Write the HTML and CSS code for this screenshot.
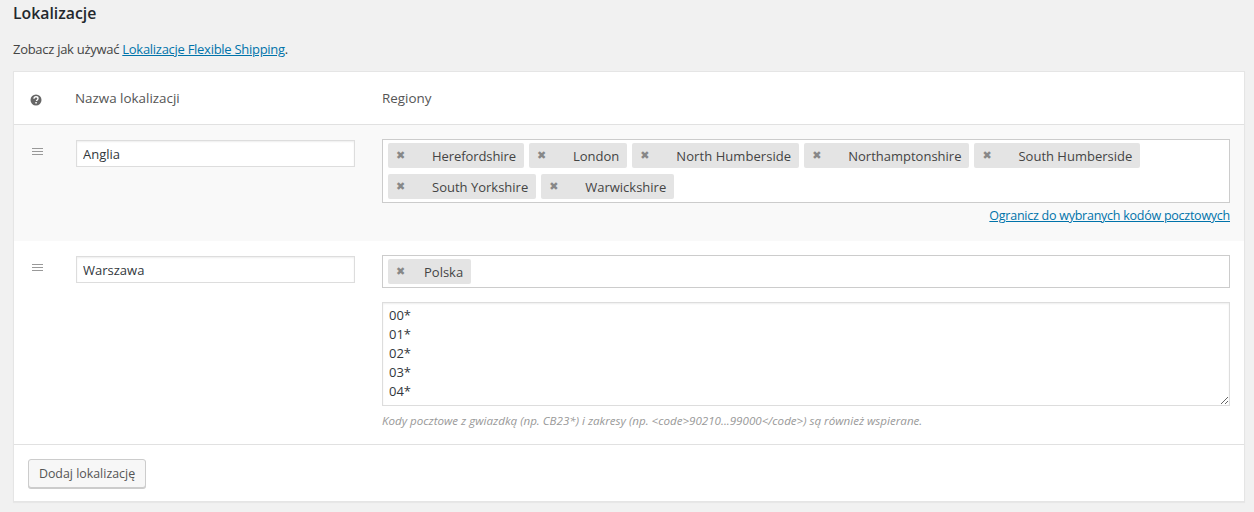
FILE: index.html
```html
<!DOCTYPE html>
<html lang="pl">
<head>
<meta charset="utf-8">
<title>Lokalizacje</title>
<link rel="stylesheet" href="styles.css">
</head>
<body>
<h2 class="title">Lokalizacje</h2>
<p class="intro">Zobacz jak używać <a href="#">Lokalizacje Flexible Shipping</a>.</p>
<section class="panel">
  <div class="grid head">
    <div class="handle-col">
      <svg class="help" width="12" height="12" viewBox="0 0 12 12" aria-hidden="true"><circle cx="6" cy="6" r="5.5" fill="#666"/><path d="M4 4.7C4 3.5 4.9 2.8 6 2.8s2 .7 2 1.7c0 1.5-1.5 1.4-1.5 2.6" fill="none" stroke="#fff" stroke-width="1.4"/><rect x="5.3" y="8" width="1.5" height="1.5" fill="#fff"/></svg>
    </div>
    <div class="head-name">Nazwa lokalizacji</div>
    <div class="head-reg">Regiony</div>
  </div>
  <div class="grid row alt">
    <div class="handle-col"><span class="drag"></span></div>
    <div class="name-col"><input class="name" type="text" value="Anglia"></div>
    <div>
      <div class="tags">
        <span class="tag"><i class="x">✖</i><span class="label label-narrow">Herefordshire</span></span>
        <span class="tag"><i class="x">✖</i><span class="label">London</span></span>
        <span class="tag"><i class="x">✖</i><span class="label label-wide">North Humberside</span></span>
        <span class="tag"><i class="x">✖</i><span class="label">Northamptonshire</span></span>
        <span class="tag"><i class="x">✖</i><span class="label">South Humberside</span></span>
        <span class="tag"><i class="x">✖</i><span class="label">South Yorkshire</span></span>
        <span class="tag"><i class="x">✖</i><span class="label">Warwickshire</span></span>
      </div>
      <div class="limit"><a href="#">Ogranicz do wybranych kodów pocztowych</a></div>
    </div>
  </div>
  <div class="grid row second">
    <div class="handle-col"><span class="drag"></span></div>
    <div class="name-col"><input class="name" type="text" value="Warszawa"></div>
    <div>
      <div class="tags">
        <span class="tag tag-short"><i class="x">✖</i><span class="label">Polska</span></span>
      </div>
      <textarea class="codes">00*
01*
02*
03*
04*</textarea>
      <p class="hint">Kody pocztowe z gwiazdką (np. CB23*) i zakresy (np. &lt;code&gt;90210...99000&lt;/code&gt;) są również wspierane.</p>
    </div>
  </div>
  <div class="foot"><button class="btn" type="button">Dodaj lokalizację</button></div>
</section>
</body>
</html>
```
FILE: styles.css
```css
* { box-sizing: border-box; }
html, body { margin: 0; }
body {
  background: #f1f1f1;
  color: #444;
  font-family: "Open Sans", "Noto Sans", sans-serif;
  font-size: 13px;
  line-height: 19px;
  padding: 0 9px 10px 13px;
  height: 512px;
  overflow: hidden;
}
a { color: #0073aa; text-decoration: underline; }
.title {
  margin: 0;
  padding-top: 3px;
  font-size: 15.8px;
  line-height: 20px;
  font-weight: 600;
  color: #23282d;
}
.intro { margin: 17px 0 12px; height: 19px; letter-spacing: -.28px; }
.panel {
  background: #fff;
  border: 1px solid #e5e5e5;
  box-shadow: 0 1px 1px rgba(0,0,0,.04);
}
.grid {
  display: grid;
  grid-template-columns: 34px 279px 848px;
  column-gap: 27px;
  padding-left: 1px;
  padding-right: 14px;
}
.head { height: 53px; align-items: center; border-bottom: 1px solid #e1e1e1; font-size: 13.4px; color: #555; }
.handle-col { padding-left: 16px; }
.help { display: block; margin: 3px 0 0 -1px; }
.head-name { margin-left: -1px; }
.row.alt { background: #f9f9f9; height: 116px; padding-top: 14px; }
.row.second { height: 204px; padding-top: 14px; border-bottom: 1px solid #e1e1e1; }
.drag {
  display: block;
  width: 11px;
  height: 7px;
  margin-top: 9px;
  margin-left: 1px;
  border-top: 1px solid #999;
  border-bottom: 1px solid #999;
  position: relative;
}
.drag::after {
  content: "";
  position: absolute;
  left: 0;
  right: 0;
  top: 2px;
  height: 1px;
  background: #999;
}
.name-col { padding-top: 1px; }
.name {
  display: block;
  width: 100%;
  height: 27px;
  border: 1px solid #ddd;
  background: #fff;
  padding: 0 6px;
  font: 13px "Open Sans", "Noto Sans", sans-serif;
  color: #32373c;
  box-shadow: inset 0 1px 2px rgba(0,0,0,.07);
  outline: none;
}
.tags {
  display: flex;
  flex-wrap: wrap;
  gap: 6px 5px;
  border: 1px solid #ccc;
  background: #fff;
  padding: 3px 5px 3px;
}
.tag {
  display: flex;
  align-items: center;
  height: 25px;
  background: #e4e4e4;
  border-radius: 2px;
  padding: 0 8px;
  color: #444;
  white-space: nowrap;
}
.label { padding-top: 1px; }
.label-narrow { letter-spacing: -.08px; }
.label-wide { letter-spacing: .07px; }
.x {
  width: 36px;
  flex: none;
  font-style: normal;
  font-family: "DejaVu Sans", sans-serif;
  font-size: 11px;
  color: #888;
}
.tag-short .x { width: 28px; }
.limit { text-align: right; margin-top: 3px; font-size: 12.5px; letter-spacing: -.25px; }
.codes {
  display: block;
  width: 100%;
  height: 104px;
  margin-top: 14px;
  border: 1px solid #ddd;
  background: #fff;
  padding: 3px 6px;
  font: 13px/19px "Open Sans", "Noto Sans", sans-serif;
  color: #32373c;
  box-shadow: inset 0 1px 2px rgba(0,0,0,.07);
  outline: none;
  resize: vertical;
}
.hint {
  margin: 6px 0 0;
  font-size: 11.6px;
  line-height: 18px;
  font-style: italic;
  color: #999;
}
.foot { padding: 14px 0 13px 14px; }
.btn {
  display: block;
  width: 118px;
  height: 29px;
  background: #f7f7f7;
  border: 1px solid #ccc;
  border-radius: 3px;
  box-shadow: 0 1px 0 #ccc;
  color: #555;
  font: 12.4px "Open Sans", "Noto Sans", sans-serif;
  padding: 0;
}
```
